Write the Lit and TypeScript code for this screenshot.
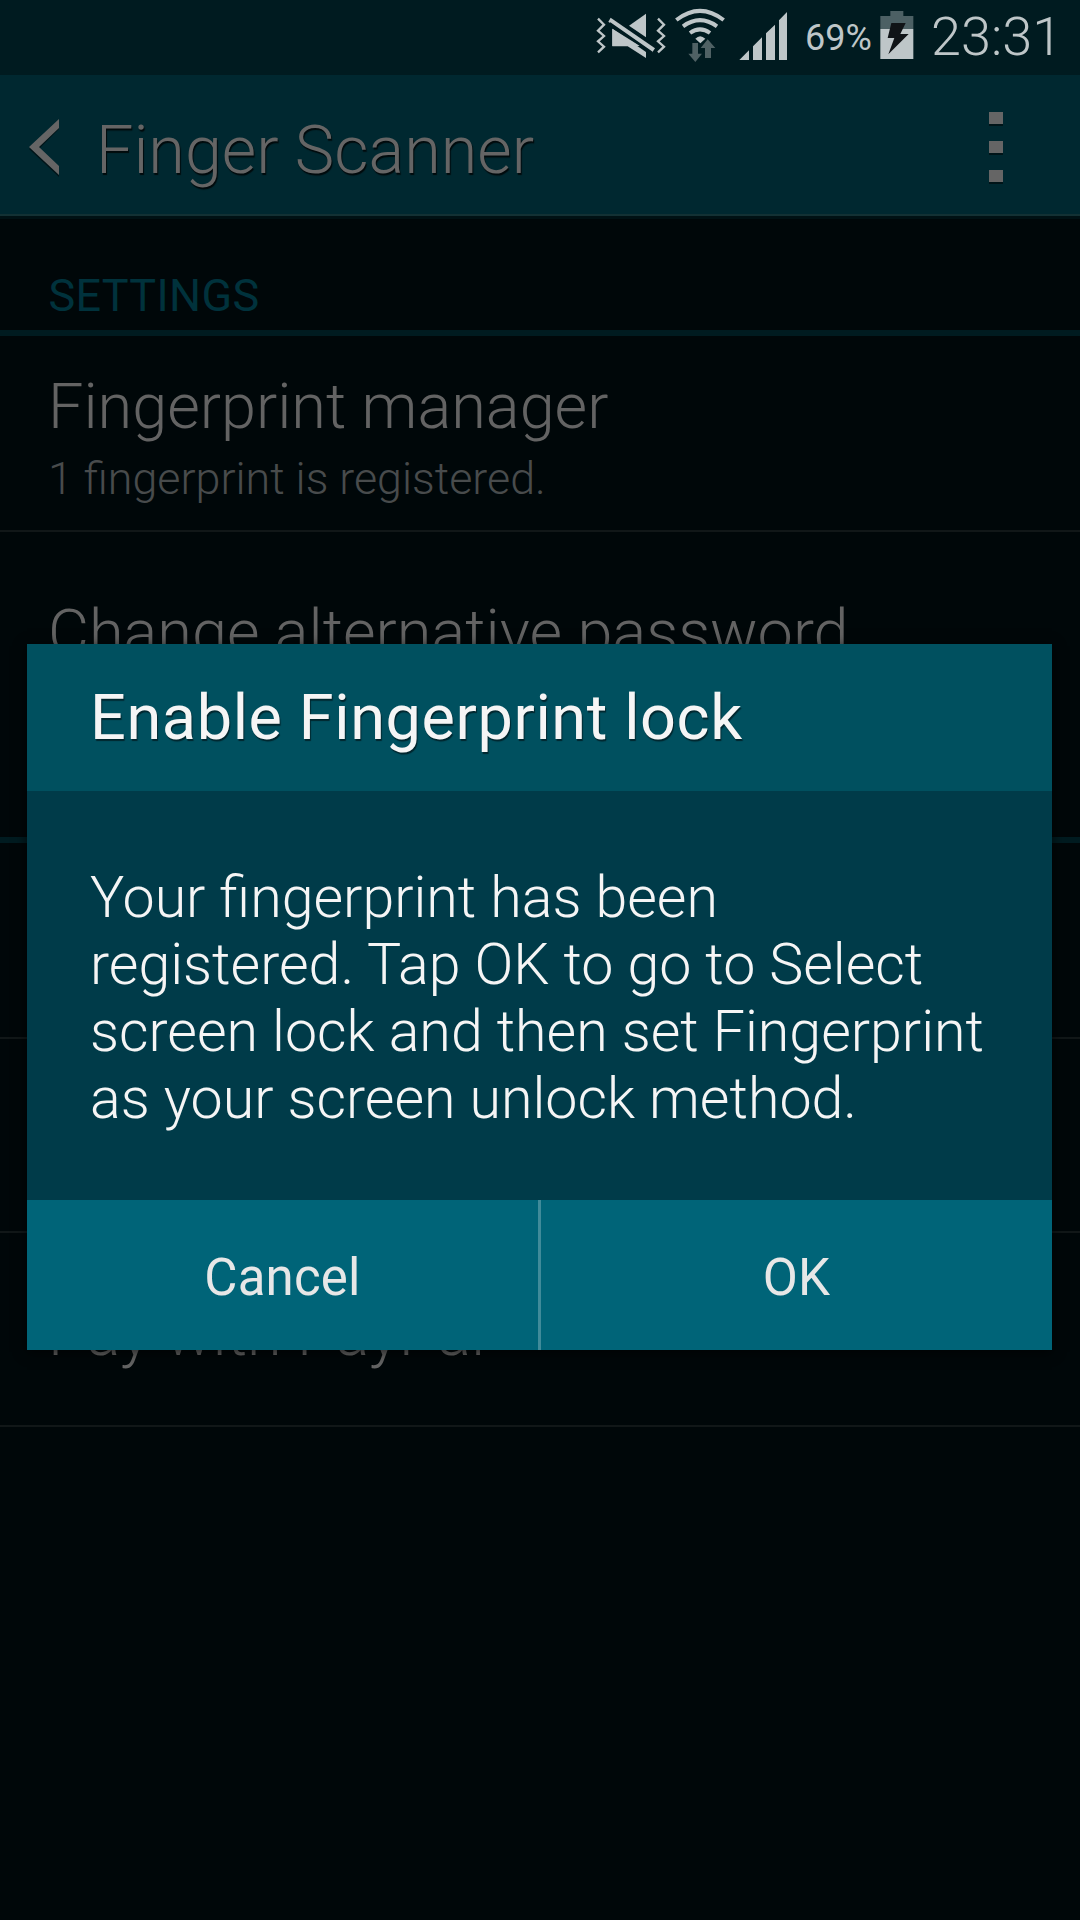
import { LitElement, html, css, svg } from "lit";
import { customElement, property } from "lit/decorators.js";

@customElement("status-bar")
export class StatusBar extends LitElement {
  @property() time = "";
  @property() battery = "";

  static styles = css`
    :host {
      display: flex;
      align-items: flex-start;
      justify-content: flex-end;
      height: 75px;
      box-sizing: border-box;
      background: #001b20;
      color: #bec6c8;
      font-family: Roboto, sans-serif;
      white-space: nowrap;
      padding-right: 27px;
    }
    .icons { width: 200px; height: 75px; margin-right: 15px; flex: none; }
    .level { font-size: 36px; line-height: 76px; font-weight: 400; width: 67px; flex: none; }
    .battery { width: 34px; height: 75px; margin-left: 8px; flex: none; }
    .clock { font-size: 54px; line-height: 73px; font-weight: 300; width: 122px; margin-left: 17px; flex: none; }
  `;

  render() {
    return html`
      <svg class="icons" viewBox="30 0 600 225" fill="#bec6c8">
        ${svg`
          <g fill="none" stroke="#bec6c8" stroke-width="7">
            <path d="M54 56 L72 74 L54 92 L72 108 L54 124 L72 140 L54 157"/>
            <path d="M234 56 L252 74 L234 92 L252 108 L234 124 L252 140 L234 157"/>
          </g>
          <path d="M97 86 L180 138 H97 Z"/>
          <path d="M97 86 L198 156 V174 L143 139 H97 Z"/>
          <path d="M198 41 V112 L147 77 Z"/>
          <path d="M92 53 L225 145 L217 157 L85 65 Z"/>
          <g fill="none" stroke="#bec6c8">
            <path stroke-width="12" d="M289 60 Q360 5 431 60"/>
            <path stroke-width="12" d="M309 79 Q360 42 411 79"/>
            <path stroke-width="12" d="M330 99 Q360 77 390 99"/>
          </g>
          <path d="M346 116 Q360 101 376 116 L361 130 Z"/>
          <path fill="#4f6164" d="M337 129 H354 V161 H366 L346 186 L325 161 H337 Z"/>
          <path fill="#4f6164" d="M383 118 L406 144 H393 V174 H375 V144 H362 Z"/>
          <path d="M478 180 L507 151 V180 Z M519 180 V139 L546 112 V180 Z M558 180 V100 L585 74 V180 Z M597 180 V61 L621 36 V180 Z"/>
          <path fill="none" stroke="#001b20" stroke-width="7" d="M89 70 L216 158 M95 48 L230 141"/>
        `}
      </svg>
      <span class="level">${this.battery}</span>
      <svg class="battery" viewBox="239 0 102 225">
        <path fill="#4c6064" d="M270 33 H309 V48 H339 V87 H240 V48 H270 Z" />
        <path fill="#bec6c8" d="M240 87 H339 V177 H240 Z" />
        <path fill="#101417" d="M273 69 H316 L300 102 H325 L264 163 L282 114 H262 Z" />
      </svg>
      <span class="clock">${this.time}</span>
    `;
  }
}

@customElement("action-bar")
export class ActionBar extends LitElement {
  @property() heading = "";

  static styles = css`
    :host {
      display: flex;
      align-items: center;
      height: 141px;
      box-sizing: border-box;
      border-bottom: 2px solid #133134;
      background: #002830;
      box-shadow: 0 3px 0 #001114;
      font-family: Roboto, sans-serif;
      color: #656565;
      padding: 6px 75px 0 27px;
    }
    .back { width: 34px; height: 60px; margin-bottom: 2px; }
    .heading {
      flex: 1;
      padding: 4px 0 0 35px;
      font-size: 66.5px;
      font-weight: 300;
      white-space: nowrap;
      text-shadow: 1px 2px 1px #000a0c;
    }
    .menu { display: flex; flex-direction: column; gap: 17px; margin: 0 2px 2px 0; }
    .dot { width: 14px; height: 12px; background: #656565; box-shadow: 0 2px 0 #001418; }
  `;

  render() {
    return html`
      <svg class="back" viewBox="27 117 34 60">
        <path fill="#001418" d="M59 121 L29 149 L59 177 V168 L39 149 L59 129 Z" />
        <path fill="#656565" d="M59 119 L29 147 L59 175 V166 L39 147 L59 128 Z" />
      </svg>
      <span class="heading">${this.heading}</span>
      <div class="menu">${[0, 1, 2].map(() => html`<div class="dot"></div>`)}</div>
    `;
  }
}

@customElement("lock-dialog")
export class LockDialog extends LitElement {
  static styles = css`
    :host {
      display: block;
      box-shadow: 0 2px 12px rgba(0, 0, 0, 0.7);
      font-family: Roboto, sans-serif;
      font-weight: 400;
      color: #f5f5f5;
      white-space: nowrap;
    }
    .title {
      height: 147px;
      box-sizing: border-box;
      padding-left: 63px;
      background: #00505f;
      font-size: 63px;
      line-height: 148px;
      letter-spacing: 0.6px;
      text-shadow: 1px 2px 1px #00262e;
    }
    .body {
      height: 409px;
      box-sizing: border-box;
      padding: 73px 0 0 63px;
      background: #003b49;
      font-size: 57.3px;
      line-height: 67px;
      font-weight: 300;
    }
    .actions { display: flex; height: 150px; background: #006478; }
    .button {
      flex: 1;
      text-align: center;
      font-size: 51px;
      line-height: 156px;
      letter-spacing: 0.2px;
      color: #e7e7e7;
    }
    .split { width: 3px; background: #408b9a; }
  `;

  render() {
    return html`
      <div class="title">Enable Fingerprint lock</div>
      <div class="body">
        <div>Your fingerprint has been</div>
        <div>registered. Tap OK to go to Select</div>
        <div>screen lock and then set Fingerprint</div>
        <div>as your screen unlock method.</div>
      </div>
      <div class="actions">
        <div class="button">Cancel</div>
        <div class="split"></div>
        <div class="button">OK</div>
      </div>
    `;
  }
}

@customElement("app-root")
export class AppRoot extends LitElement {
  static styles = css`
    :host {
      display: flex;
      flex-direction: column;
      position: relative;
      width: 1080px;
      height: 1920px;
      overflow: hidden;
      background: #000709;
      font-family: Roboto, sans-serif;
      font-weight: 300;
      color: #636363;
      white-space: nowrap;
    }
    .section {
      height: 120px;
      box-sizing: border-box;
      border-bottom: 6px solid #001b20;
      padding: 53px 0 0 48.5px;
      font-size: 45px;
      line-height: 53px;
      font-weight: 400;
      letter-spacing: 0.3px;
      color: #00323c;
    }
    .section.second { height: 117px; }
    .row {
      display: flex;
      flex-direction: column;
      justify-content: center;
      height: 194px;
      box-sizing: border-box;
      border-bottom: 2px solid #111718;
      padding: 9px 0 0 48px;
    }
    .row.first { height: 196px; padding-top: 16px; }
    .row.last { border-bottom-color: transparent; }
    .name { font-size: 63px; line-height: 76px; }
    .detail { font-size: 44.8px; line-height: 68px; color: #484b4c; }
    lock-dialog { position: absolute; left: 27px; top: 644px; width: 1025px; }
  `;

  render() {
    return html`
      <status-bar battery="69%" time="23:31"></status-bar>
      <action-bar heading="Finger Scanner"></action-bar>
      <div class="section">SETTINGS</div>
      <div class="row first">
        <div class="name">Fingerprint manager</div>
        <div class="detail">1 fingerprint is registered.</div>
      </div>
      <div class="row last"><div class="name">Change alternative password</div></div>
      <div class="section second"></div>
      <div class="row first"></div>
      <div class="row"></div>
      <div class="row"><div class="name">Pay with PayPal</div></div>
      <lock-dialog></lock-dialog>
    `;
  }
}
